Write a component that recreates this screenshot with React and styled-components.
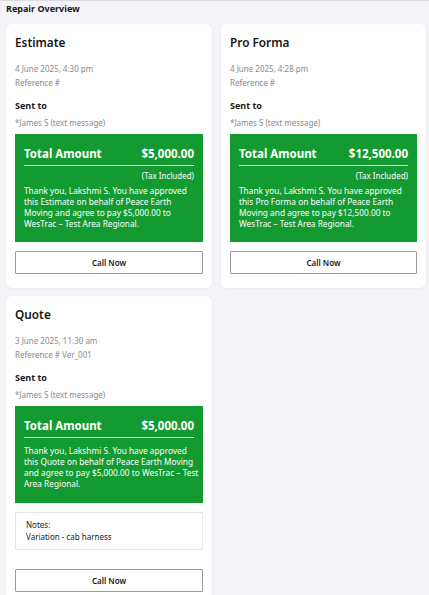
import React from "react";
import styled, { createGlobalStyle } from "styled-components";

const GlobalStyle = createGlobalStyle`
  html, body {
    margin: 0;
    padding: 0;
    background: #f3f3f8;
    font-family: "Noto Sans", "Open Sans", sans-serif;
    color: #1b1b1b;
  }
`;

const Page = styled.div`
  min-height: 595px;
  border-top: 1px solid #dcdce0;
  padding: 0 6px;
  box-sizing: border-box;
`;

const Header = styled.h1`
  margin: 0;
  padding: 1px 0 0;
  height: 22px;
  font-size: 9px;
  font-weight: 700;
  color: #1a1a1a;
`;

const Grid = styled.div`
  display: grid;
  grid-template-columns: 206px 205px;
  column-gap: 9px;
  row-gap: 8px;
  align-items: start;
`;

const Card = styled.section`
  background: #fff;
  border-radius: 6px;
  box-shadow: 0 1px 3px rgba(0, 0, 0, 0.05);
  padding: 9px 9px 14px;
  display: flex;
  flex-direction: column;
`;

const Title = styled.h2`
  margin: 0;
  font-size: 11.8px;
  font-weight: 600;
  line-height: 18px;
  color: #161616;
`;

const Meta = styled.div`
  margin-top: 11px;
  font-size: 8px;
  line-height: 14px;
  color: #8a8a8a;
`;

const SentLabel = styled.div`
  margin-top: 8px;
  font-size: 9px;
  font-weight: 700;
  line-height: 16px;
  color: #1a1a1a;
`;

const Recipient = styled.div`
  margin-top: 2px;
  font-size: 8px;
  line-height: 14px;
  color: #8a8a8a;
`;

const Approval = styled.div`
  margin-top: 4px;
  background: #139a31;
  color: #fff;
  padding: 11px 9px ${(p) => (p.$tax ? "13px" : "14px")};
`;

const TotalRow = styled.div`
  display: flex;
  justify-content: space-between;
  align-items: center;
  font-size: 11.5px;
  font-weight: 700;
  line-height: 18px;
  padding-bottom: 2px;
  border-bottom: 1.5px solid rgba(255, 255, 255, 0.85);
`;

const Tax = styled.div`
  text-align: right;
  font-size: 8px;
  line-height: 12px;
  margin-top: 4px;
`;

const Message = styled.p`
  margin: ${(p) => (p.$tax ? "3px" : "7px")} -6px 0 0;
  font-size: 8.3px;
  line-height: 11px;
`;

const Notes = styled.div`
  margin-top: 9px;
  border: 1px solid #e6e6e8;
  padding: 6px 10px 7px;
  font-size: 8px;
  line-height: 11.5px;
  color: #222;
`;

const CallButton = styled.button`
  margin-top: ${(p) => (p.$spaced ? "19px" : "9px")};
  height: 23px;
  width: 100%;
  background: #fff;
  border: 1px solid #9a9a9e;
  border-radius: 1px;
  font-family: inherit;
  font-size: 8px;
  font-weight: 600;
  color: #1a1a1a;
  cursor: pointer;
`;

const quotes = [
  {
    kind: "Estimate",
    date: "4 June 2025, 4:30 pm",
    ref: "",
    amount: "$5,000.00",
    tax: true,
  },
  {
    kind: "Pro Forma",
    date: "4 June 2025, 4:28 pm",
    ref: "",
    amount: "$12,500.00",
    tax: true,
  },
  {
    kind: "Quote",
    date: "3 June 2025, 11:30 am",
    ref: "Ver_001",
    amount: "$5,000.00",
    tax: false,
    notes: "Variation - cab harness",
  },
];

const QuoteCard = ({ q }) => (
  <Card>
    <Title>{q.kind}</Title>
    <Meta>
      {q.date}
      <br />
      Reference # {q.ref}
    </Meta>
    <SentLabel>Sent to</SentLabel>
    <Recipient>*James S (text message)</Recipient>
    <Approval $tax={q.tax}>
      <TotalRow>
        <span>Total Amount</span>
        <span>{q.amount}</span>
      </TotalRow>
      {q.tax && <Tax>(Tax Included)</Tax>}
      <Message $tax={q.tax}>
        Thank you, Lakshmi S. You have approved this {q.kind} on behalf of
        Peace Earth Moving and agree to pay {q.amount} to WesTrac – Test Area
        Regional.
      </Message>
    </Approval>
    {q.notes && (
      <Notes>
        Notes:
        <br />
        {q.notes}
      </Notes>
    )}
    <CallButton $spaced={!!q.notes}>Call Now</CallButton>
  </Card>
);

export default function App() {
  return (
    <>
      <GlobalStyle />
      <Page>
        <Header>Repair Overview</Header>
        <Grid>
          {quotes.map((q) => (
            <QuoteCard key={q.kind} q={q} />
          ))}
        </Grid>
      </Page>
    </>
  );
}
